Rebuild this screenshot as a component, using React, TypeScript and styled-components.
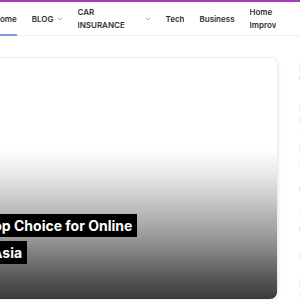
import styled, { createGlobalStyle } from "styled-components";

const GlobalStyle = createGlobalStyle`
  html, body {
    margin: 0;
    padding: 0;
    background: #ffffff;
  }
`;

const navItems = [
  { label: "Home", active: true },
  { label: "BLOG", dropdown: true },
  { label: "CAR INSURANCE", dropdown: true, width: 64 },
  { label: "Tech" },
  { label: "Business" },
  { label: "Home Improvement", width: 26 },
];

const sidebarLinks = [
  { text: "Latest Posts", tone: "muted" },
  { text: "Why online slots keep growing", tone: "link" },
  { text: "", tone: "muted" },
  { text: "Best car insurance tips", tone: "link" },
  { text: "March 12, 2024", tone: "muted" },
  { text: "Tech trends to watch", tone: "muted" },
  { text: "Business ideas for 2024", tone: "muted" },
  { text: "Home improvement on a budget", tone: "muted" },
  { text: "", tone: "muted" },
  { text: "Guide to live casino games", tone: "link" },
  { text: "", tone: "muted" },
  { text: "Small kitchen makeovers", tone: "muted" },
  { text: "Choosing a new laptop", tone: "muted" },
  { text: "", tone: "muted" },
  { text: "Popular categories", tone: "link" },
  { text: "", tone: "muted" },
  { text: "Insurance basics", tone: "muted" },
  { text: "Saving on premiums", tone: "muted" },
];

const Chevron = () => (
  <svg width="6" height="4" viewBox="0 0 6 4" fill="none">
    <path d="M0.8 0.8 L3 3 L5.2 0.8" stroke="#a3acd6" strokeWidth="1" strokeLinecap="round" />
  </svg>
);

const App = () => {
  return (
    <Page>
      <GlobalStyle />
      <TopBar />
      <Header>
        <NavList>
          {navItems.map((item) => (
            <NavItem key={item.label} $active={!!item.active}>
              <NavLabel $width={item.width}>{item.label}</NavLabel>
              {item.dropdown && <Chevron />}
            </NavItem>
          ))}
        </NavList>
      </Header>
      <Main>
        <Content>
          <FeatureCard>
            <CardTitle>
              <TitleText>
                Top Choice for Online
                <br />
                Asia
              </TitleText>
            </CardTitle>
          </FeatureCard>
        </Content>
        <Sidebar>
          {sidebarLinks.map((link, i) => (
            <SideLine key={i} $tone={link.tone}>
              {link.text || "\u00a0"}
            </SideLine>
          ))}
        </Sidebar>
      </Main>
    </Page>
  );
};

const Page = styled.div`
  width: 300px;
  height: 300px;
  overflow: hidden;
  background: #ffffff;
  font-family: Inter, "Noto Sans", sans-serif;
`;

const TopBar = styled.div`
  height: 2px;
  background: #a23db5;
`;

const Header = styled.header`
  height: 33px;
  border-bottom: 1px solid #f0f0f3;
`;

const NavList = styled.nav`
  display: flex;
  align-items: stretch;
  gap: 15px;
  height: 100%;
  margin-left: -6px;
`;

const NavItem = styled.div<{ $active: boolean }>`
  display: flex;
  align-items: center;
  gap: 3px;
  flex: 0 0 auto;
  box-sizing: border-box;
  border-bottom: 2px solid ${(p) => (p.$active ? "#8592e2" : "transparent")};
  padding-top: 2px;
  margin-bottom: -1px;
`;

const NavLabel = styled.span<{ $width?: number }>`
  display: block;
  width: ${(p) => (p.$width ? `${p.$width}px` : "auto")};
  overflow: hidden;
  font-size: 8px;
  font-weight: 600;
  line-height: 13px;
  color: #2f2f35;
  white-space: ${(p) => (p.$width ? "normal" : "nowrap")};
`;

const Main = styled.main`
  display: flex;
  gap: 21px;
  margin-left: -20px;
  padding-top: 21px;
`;

const Content = styled.div`
  flex: 0 0 298px;
`;

const FeatureCard = styled.article`
  box-sizing: border-box;
  height: 243px;
  border: 1px solid #ededf0;
  border-radius: 8px;
  box-shadow: 1px 1px 3px rgba(0, 0, 0, 0.08);
  display: flex;
  flex-direction: column;
  justify-content: flex-end;
  padding-bottom: 33px;
  background: linear-gradient(
    to bottom,
    #ffffff 0%,
    #ffffff 38%,
    #e4e4e4 50%,
    #bcbcbc 63%,
    #909090 77%,
    #5c5c5c 90%,
    #3a3a3a 100%
  );
`;

const CardTitle = styled.h2`
  margin: 0 0 0 6px;
  font-size: 14px;
  font-weight: 700;
  line-height: 27px;
  text-indent: -7px;
  color: #ffffff;
`;

const TitleText = styled.span`
  background: #000000;
  padding: 3px 5px;
  box-decoration-break: clone;
  -webkit-box-decoration-break: clone;
`;

const Sidebar = styled.aside`
  flex: 0 0 200px;
  padding-top: 4px;
`;

const SideLine = styled.div<{ $tone: string }>`
  font-size: 10px;
  line-height: 13.5px;
  font-weight: 400;
  color: ${(p) => (p.$tone === "link" ? "#8a8edc" : "#a8a8b0")};
  white-space: nowrap;
`;

export default App;
